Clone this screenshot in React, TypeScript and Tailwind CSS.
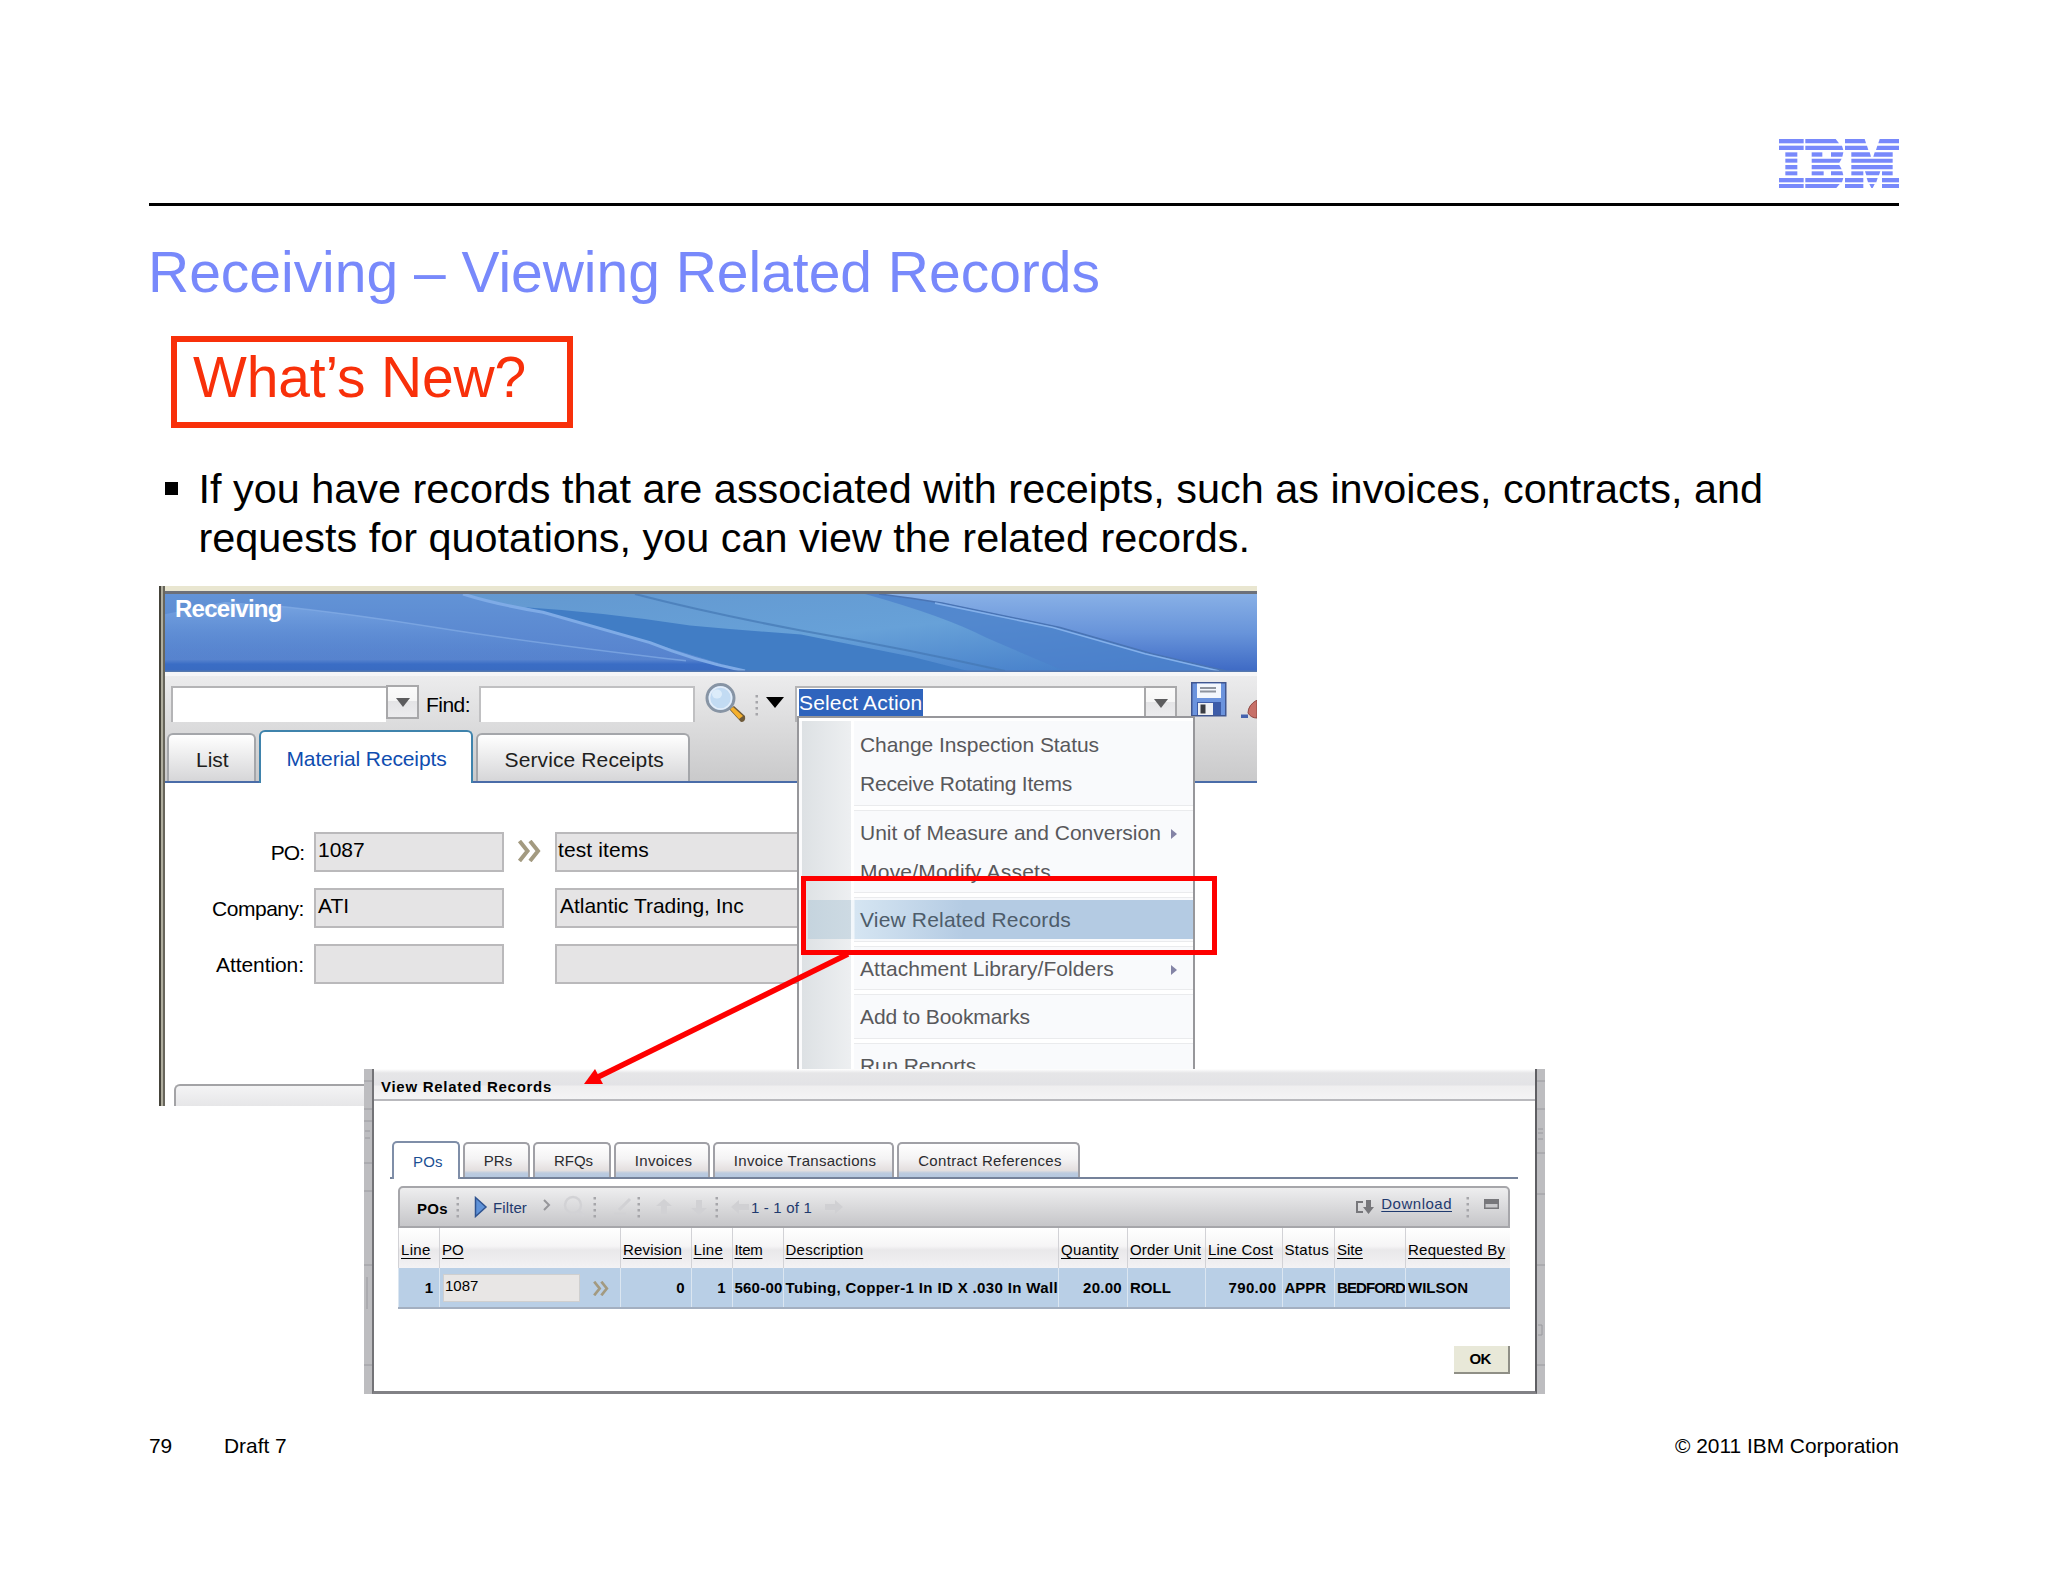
import React from 'react';
import clsx from 'clsx';

// Every stripe of the logo: y, height and the horizontal segments in it
const LOGO_STRIPES: { y: number; h: number; segs: string[] }[] = [
  { y: 0, h: 13, segs: ['0,74', '79,170,180', '198,257,261', '302,360,360,298'] },
  { y: 20, h: 13, segs: ['0,74', '79,189,193', '198,264,268', '295,360,360,291'] },
  { y: 40, h: 13, segs: ['19,55', '98,130', '156,193,190', '217,272,276', '287,341,341,283'] },
  { y: 59, h: 12, segs: ['19,55', '98,188,181', '217,341'] },
  { y: 78, h: 13, segs: ['19,55', '98,181,188', '217,341'] },
  { y: 97, h: 12, segs: ['19,55', '98,134', '156,190,193', '217,253', '258,304,300,262', '309,341'] },
  { y: 117, h: 13, segs: ['0,74', '79,193,189', '198,253', '263,296,292,267', '309,360'] },
  { y: 135, h: 12, segs: ['0,74', '79,182,172', '198,253', '271,287,281,277', '309,360'] },
];

const Logo = () => (
  <svg width="120" height="49" viewBox="0 0 360 147" fill="#7889fb">
    {LOGO_STRIPES.map(({ y, h, segs }) =>
      segs.map((seg) => {
        const [x1, x2, x3 = x2, x4 = x1] = seg.split(',').map(Number);
        return <polygon key={`${y}-${seg}`} points={`${x1},${y} ${x2},${y} ${x3},${y + h} ${x4},${y + h}`} />;
      })
    )}
  </svg>
);

const Banner = () => (
  <svg className="block w-full h-[78px]" viewBox="0 0 1092 77" preserveAspectRatio="none">
    <defs>
      <linearGradient id="base" x1="0" y1="0" x2="0" y2="1">
        <stop offset="0" stopColor="#6293d6" />
        <stop offset="0.84" stopColor="#5783ce" />
        <stop offset="0.9" stopColor="#3a6dc5" />
        <stop offset="1" stopColor="#3a6bc0" />
      </linearGradient>
      <linearGradient id="glow" x1="0" y1="0" x2="0" y2="1">
        <stop offset="0" stopColor="#7aa6e2" />
        <stop offset="1" stopColor="#4f80cf" stopOpacity="0" />
      </linearGradient>
      <linearGradient id="right" x1="0" y1="0" x2="0" y2="1">
        <stop offset="0" stopColor="#88b0e6" />
        <stop offset="0.5" stopColor="#6894da" />
        <stop offset="1" stopColor="#3d69c4" />
      </linearGradient>
      <linearGradient id="mid" x1="0" y1="0" x2="1" y2="1">
        <stop offset="0" stopColor="#6398d0" />
        <stop offset="0.5" stopColor="#67a1d8" />
        <stop offset="1" stopColor="#4079c8" />
      </linearGradient>
    </defs>
    <rect width="1092" height="77" fill="url(#base)" />
    <path d="M60 8 Q160 14 271 33 T521 66 L400 66 L0 66 L0 20 Z" fill="url(#glow)" />
    <path d="M106 11 Q190 20 271 33 T521 66" fill="none" stroke="#83ade6" strokeWidth="1.5" opacity="0.7" />
    <path d="M298 0 Q330 10 378 18 L485 48 L580 76 L1061 76 L987 59 L895 33 L777 9 L714 0 Z" fill="url(#mid)" />
    <path d="M360 13 Q440 18 525 31 Q580 36 636 40 L747 62 L803 76 L580 76 L485 48 Z" fill="#417dc5" />
    <path d="M470 0 Q540 18 636 36 Q740 54 840 76" fill="none" stroke="#4478b4" strokeWidth="2" opacity="0.7" />
    <path d="M700 0 Q780 22 821 43 Q870 64 900 76 L1061 76 L987 59 L895 33 L777 9 L714 0 Z" fill="#4c80cb" opacity="0.75" />
    <path d="M714 0 Q740 3 777 9 L895 33 L987 59 L1061 76 L1092 77 L1092 0 Z" fill="url(#right)" />
    <path d="M298 0 Q330 10 378 18 L485 48 Q530 66 580 76" fill="none" stroke="#7fabe6" strokeWidth="3" />
    <path d="M714 0 Q740 3 777 9 L895 33 L987 59 L1061 76" fill="none" stroke="#4a74b4" strokeWidth="1.5" />
    <path d="M770 9 L888 33 L980 59 L1054 76" fill="none" stroke="#84b0ea" strokeWidth="1.6" />
    <rect y="75.5" width="1092" height="1.5" fill="#5578ae" />
  </svg>
);

const SearchIcon = () => (
  <svg className="mt-[-4px] ml-[10px] shrink-0" width="42" height="42" viewBox="0 0 42 42">
    <path d="M24 27 L29 24 L40 34 Q41 40 36 40 Z" fill="#6e5a3a" />
    <path d="M25 27 L28 25 L38 34 L34 37 Z" fill="#f5b02c" />
    <circle cx="15.5" cy="16" r="13.5" fill="#c2dbf3" stroke="#8794a4" strokeWidth="3" />
    <circle cx="15.5" cy="16" r="11" fill="none" stroke="#e4eefa" strokeWidth="1.5" />
    <ellipse cx="12" cy="12" rx="5" ry="4.5" fill="#dcecfa" />
  </svg>
);

const SaveIcon = () => (
  <svg className="mt-[-4px] ml-[14px] shrink-0" width="36" height="35" viewBox="0 0 36 35">
    <rect x="0.75" y="0.75" width="34" height="33" fill="#6b93dd" stroke="#40568f" strokeWidth="1.5" />
    <rect x="6" y="1.5" width="24" height="14.5" fill="#f3f7fd" />
    <rect x="9" y="5" width="16" height="2" fill="#8e949e" />
    <rect x="9" y="8.5" width="16" height="2" fill="#8e949e" />
    <rect x="6" y="20" width="24" height="13" fill="#3d5ca8" />
    <rect x="7" y="21" width="15" height="12" fill="#f0f1f3" />
    <rect x="9.5" y="22.5" width="5" height="9" fill="#3a3c42" />
  </svg>
);

const ClearIcon = () => (
  <svg className="mt-[14px] ml-[13px] shrink-0" width="17" height="20" viewBox="0 0 17 20">
    <rect x="1" y="14.5" width="7" height="3.5" fill="#4563ae" />
    <path d="M17 0 Q8 5 8 13 Q11 18 17 18 Z" fill="#c77068" stroke="#8f4640" strokeWidth="1" />
  </svg>
);

const Chevrons = ({ className }: { className: string }) => (
  <svg className={className} viewBox="0 0 24 22" fill="none" stroke="#a39a80" strokeWidth="4">
    <path d="M2 1 L10 11 L2 21 M12.5 1 L20.5 11 L12.5 21" />
  </svg>
);

const Dots = ({ className }: { className: string }) => (
  <svg className={className} width="4" height="22" viewBox="0 0 4 22" fill="#a6a6aa">
    {[1, 7, 13, 19].map((y) => (
      <rect key={y} x="0.5" y={y} width="2.5" height="2.5" />
    ))}
  </svg>
);

const DropButton = ({ className }: { className?: string }) => (
  <div
    className={clsx(
      'flex h-[34px] w-[33px] shrink-0 items-center justify-center border-2 border-[#a8a8aa] bg-[linear-gradient(#fafafa_0,#f6f6f6_45%,#e4e4e6_46%,#ececee_100%)]',
      className
    )}
  >
    <svg width="14" height="9" viewBox="0 0 14 9" fill="#5c5c5e">
      <path d="M0 0 H14 L7 9 Z" />
    </svg>
  </div>
);

const FORM_ROWS = [
  { label: 'PO:', value: '1087', detail: 'test items', link: true, labelClass: 'tracking-[-1px]', detailClass: 'pl-[1px] tracking-[0.11px]' },
  { label: 'Company:', value: 'ATI', detail: 'Atlantic Trading, Inc', link: false, labelClass: 'tracking-[-0.46px]', detailClass: 'pl-[3px] tracking-[-0.04px]' },
  { label: 'Attention:', value: '', detail: '', link: false, labelClass: 'tracking-[-0.07px]', detailClass: '' },
];

const MENU: ({ text: string; cls: string; sub?: boolean; active?: boolean } | null)[] = [
  { text: 'Change Inspection Status', cls: 'tracking-[-0.06px]' },
  { text: 'Receive Rotating Items', cls: 'tracking-[-0.23px]' },
  null,
  { text: 'Unit of Measure and Conversion', cls: 'tracking-[-0.01px]', sub: true },
  { text: 'Move/Modify Assets', cls: 'tracking-[0.23px]' },
  null,
  { text: 'View Related Records', cls: 'tracking-[0.18px]', active: true },
  null,
  { text: 'Attachment Library/Folders', cls: 'tracking-[0.07px]', sub: true },
  null,
  { text: 'Add to Bookmarks', cls: 'tracking-[-0.1px]' },
  null,
  { text: 'Run Reports', cls: 'tracking-[-0.17px]' },
];

const DIALOG_TABS = [
  { text: 'PRs', cls: 'w-[67px]' },
  { text: 'RFQs', cls: 'w-[78px]' },
  { text: 'Invoices', cls: 'w-[96px] tracking-[0.3px]' },
  { text: 'Invoice Transactions', cls: 'w-[181px] tracking-[0.28px]' },
  { text: 'Contract References', cls: 'w-[183px] tracking-[0.32px]' },
];

const COLUMNS = [
  { head: 'Line', cls: 'tracking-[0.3px]', value: '1', cellCls: 'text-right pr-[6px]' },
  { head: 'PO', cls: '', value: '', cellCls: '' },
  { head: 'Revision', cls: 'tracking-[0.18px]', value: '0', cellCls: 'text-right pr-[6px]' },
  { head: 'Line', cls: 'tracking-[0.3px]', value: '1', cellCls: 'text-right pr-[6px]' },
  { head: 'Item', cls: 'tracking-[-0.3px]', value: '560-00', cellCls: 'tracking-[0.22px]' },
  { head: 'Description', cls: 'tracking-[0.25px]', value: 'Tubing, Copper-1 In ID X .030 In Wall', cellCls: 'tracking-[0.36px]' },
  { head: 'Quantity', cls: 'tracking-[0.25px]', value: '20.00', cellCls: 'text-right pr-[5px] tracking-[0.29px]' },
  { head: 'Order Unit', cls: 'tracking-[0.18px]', value: 'ROLL', cellCls: '' },
  { head: 'Line Cost', cls: 'tracking-[0.18px]', value: '790.00', cellCls: 'text-right pr-[5px] tracking-[0.35px]' },
  { head: 'Status', cls: 'tracking-[0.35px] no-underline!', value: 'APPR', cellCls: '' },
  { head: 'Site', cls: '', value: 'BEDFORD', cellCls: 'tracking-[-0.88px]' },
  { head: 'Requested By', cls: 'tracking-[0.25px]', value: 'WILSON', cellCls: '' },
];

const GRID =
  'grid grid-cols-[41px_181px_70.5px_41px_51px_275.5px_69px_78px_76.5px_52.5px_71px_1fr]';

const ReceivingWindow = () => (
  <div className="ml-[159px] flex h-[520px] w-[1098px] text-[21px]">
    <div className="w-[2px] bg-[#45433a]" />
    <div className="w-[2px] bg-[#b0ae9f]" />
    <div className="w-[2px] bg-[#68665c]" />
    <div className="flex w-[1092px] flex-col overflow-hidden">
      <div className="h-[5px] shrink-0 bg-[#e9e6d0]" />
      <div className="h-[3px] shrink-0 bg-[#6c7078]" />
      <div className="relative h-[78px] shrink-0">
        <Banner />
        <div className="absolute left-[10px] top-[1px] text-[24px] font-bold leading-[28px] tracking-[-0.75px] text-white">
          Receiving
        </div>
      </div>
      <div className="h-[4px] shrink-0 bg-[#f6f6f7]" />
      <div className="flex h-[107px] shrink-0 flex-col justify-between bg-linear-to-b from-[#ececed] to-[#c9c9ca]">
        <div className="flex items-start pt-[10px]">
          <div className="ml-[6px] flex h-[36px] w-[248px] shrink-0 items-start">
            <div className="h-[36px] w-[215px] border-l-2 border-t-2 border-[#b4b4b6] bg-white" />
            <DropButton className="mt-[-1px]" />
          </div>
          <div className="ml-[7px] mt-[6px] w-[53px] shrink-0 leading-[25px] tracking-[-0.54px]">Find:</div>
          <div className="h-[36px] w-[216px] shrink-0 border-2 border-b-0 border-[#c0c0c2] bg-white" />
          <SearchIcon />
          <Dots className="mt-[8px] ml-[8px] shrink-0" />
          <svg className="mt-[11px] ml-[7px] shrink-0" width="18" height="11" viewBox="0 0 18 11">
            <path d="M0 0 H18 L9 11 Z" />
          </svg>
          <div className="ml-[11px] flex h-[36px] w-[382px] shrink-0 items-start justify-between border-l-2 border-t-2 border-[#b4b4b6] bg-white">
            <div className="ml-[2px] mt-[1px] h-[28px] w-[124px] bg-[#2f64bd] leading-[27px] tracking-[0.15px] text-white">
              Select Action
            </div>
            <DropButton className="mt-[-2px]" />
          </div>
          <SaveIcon />
          <ClearIcon />
        </div>
        <div className="flex h-[52px] shrink-0 items-end border-b-2 border-[#4a6ca8] pl-[2px] leading-[50px]">
          <div className="h-[48px] w-[89px] rounded-t-[6px] border-2 border-b-0 border-[#a4a6aa] bg-linear-to-b from-white to-[#d6d6d8] pl-[27px] text-[#1e1e20]">
            List
          </div>
          <div className="mb-[-2px] ml-[2.5px] h-[53px] w-[214px] rounded-t-[6px] border-2 border-b-0 border-[#3f83ac] bg-white pl-[26px] leading-[54px] tracking-[-0.13px] text-[#0f4db0]">
            Material Receipts
          </div>
          <div className="ml-[3px] h-[48px] w-[214px] rounded-t-[6px] border-2 border-b-0 border-[#a4a6aa] bg-linear-to-b from-white to-[#d6d6d8] pl-[27px] tracking-[0.12px] text-[#1e1e20]">
            Service Receipts
          </div>
        </div>
      </div>
      <div className="flex grow flex-col bg-white">
        <div className="flex flex-col gap-[16px] pt-[49px]">
          {FORM_ROWS.map((row) => (
            <div key={row.label} className="flex h-[40px] items-center">
              <div className={clsx('w-[139px] pt-[2px] text-right leading-[42px]', row.labelClass)}>{row.label}</div>
              <div className="ml-[10px] h-[40px] w-[190px] border-2 border-[#bab9bb] bg-[#e5e4e5] pl-[2px] leading-[31px]">
                {row.value}
              </div>
              <div className="flex w-[51px] justify-center">
                {row.link && <Chevrons className="mb-[2px] h-[22px] w-[25px]" />}
              </div>
              <div className={clsx('h-[40px] w-[260px] border-2 border-[#bab9bb] bg-[#e5e4e5] leading-[31px]', row.detailClass)}>
                {row.detail}
              </div>
            </div>
          ))}
        </div>
        <div className="ml-[9px] mt-auto h-[22px] w-[240px] rounded-tl-[6px] border-l-2 border-t-2 border-[#a3a3a6] bg-linear-to-b from-[#f4f4f5] to-[#e6e6e8]" />
      </div>
    </div>
  </div>
);

const ActionMenu = () => (
  <div className="absolute left-[797px] top-[130px] h-[353px] w-[398px] overflow-hidden border-x-2 border-t-2 border-[#97979b] bg-[linear-gradient(to_right,#fbfbfc_0,#fbfbfc_3px,#dde1e4_3px,#edeff1_52px,#ffffff_52px,#ffffff_55px,#f9fafc_55px)] text-[21px] text-[#58585b]">
    <div className="h-[3px] bg-white" />
    <div className="pt-[4px]">
      {MENU.map((item, i) =>
        item ? (
          <div
            key={i}
            className={clsx(
              'flex h-[39px] items-center pl-[61px] leading-[39px]',
              item.active &&
                'bg-[linear-gradient(to_right,transparent_9px,#c5d4de_9px,#cddae3_52px,#f2f7fb_52px,#f2f7fb_55px,#d5e5f2_56px,#b4cbe3_165px)] text-[#4d5c6a]'
            )}
          >
            <span className={item.cls}>{item.text}</span>
            {item.sub && (
              <svg className="ml-auto mr-[16px] mt-[3px]" width="6" height="10" viewBox="0 0 6 10" fill="#8484a6">
                <path d="M0 0 L6 5 L0 10 Z" />
              </svg>
            )}
          </div>
        ) : (
          <div key={i} className="ml-[55px] flex h-[9.5px] items-center">
            <div className="h-[6px] w-full border-y border-[#eaebed] bg-white" />
          </div>
        )
      )}
    </div>
  </div>
);

// Faded toolbar buttons that are switched off
const GhostIcons = () => (
  <>
    <svg className="ml-[11px]" width="24" height="24" viewBox="0 0 24 24" fill="none" stroke="#d2d2d5" strokeWidth="2.5">
      <circle cx="11" cy="10" r="8" />
      <path d="M17 16 L22 21" />
    </svg>
    <Dots className="ml-[7px]" />
    <svg className="ml-[14px]" width="22" height="22" viewBox="0 0 22 22" fill="none" stroke="#d1d1d4" strokeWidth="3">
      <path d="M3 18 H15 M8 14 L19 3" />
    </svg>
    <Dots className="ml-[4px]" />
    <svg className="ml-[14px]" width="18" height="22" viewBox="0 0 18 22" fill="#d1d1d4">
      <path d="M9 3 L17 10 H12 V18 H6 V10 H1 Z" />
    </svg>
    <svg className="ml-[17px]" width="18" height="22" viewBox="0 0 18 22" fill="#d1d1d4">
      <path d="M9 19 L17 12 H12 V4 H6 V12 H1 Z" />
    </svg>
    <Dots className="ml-[7px]" />
    <svg className="ml-[11px]" width="20" height="18" viewBox="0 0 20 18" fill="#d0d0d3">
      <path d="M1 9 L9 2 V6 H19 V12 H9 V16 Z" />
    </svg>
  </>
);

const EdgeStrip = ({ marks }: { marks: string }) => (
  <div className="w-[8px] shrink-0 overflow-hidden bg-[#bdbdc0]">
    <svg width="8" height="325" viewBox="0 0 8 325" fill="none" stroke="#9a9a9f" strokeWidth="1">
      <path d={marks} />
    </svg>
  </div>
);

const RelatedRecordsDialog = () => (
  <div className="absolute left-[364px] top-[483px] flex h-[325px] w-[1180px] text-[15px]">
    <EdgeStrip marks="M0 12 H8 M0 40 H8 M0 52 H8 M1 62 H6 M1 69 H6 M0 94 H8 M0 122 H8 M0 196 H8 M3 208 V240 M0 296 H8" />
    <div className="flex w-[1165px] shrink-0 flex-col border-b-[3px] border-l-2 border-r-2 border-b-[#818185] border-l-[#737377] border-r-[#5f5f63] bg-white">
      <div className="h-[32px] shrink-0 border-b-2 border-[#b9b9bd] bg-[linear-gradient(#ffffff_0,#e6e6e8_4px,#e3e3e6_16px,#efeeef_17px,#f4f4f5_30px)] pl-[7px] font-bold leading-[35px] tracking-[0.73px]">
        View Related Records
      </div>
      <div className="ml-[16px] mt-[40px] flex h-[38px] w-[1128px] shrink-0 items-end gap-[3px] border-b-2 border-[#75829a] pl-[2px] leading-[34px] text-[#2b2b2f]">
        <div className="mb-[-2px] h-[38px] w-[68px] rounded-t-[5px] border-2 border-b-0 border-[#7f8ea8] bg-white pl-[19px] leading-[37px] tracking-[0.2px] text-[#1a4f93]">
          POs
        </div>
        {DIALOG_TABS.map((tab) => (
          <div
            key={tab.text}
            className={clsx(
              'h-[35px] rounded-t-[5px] border-2 border-b-0 border-[#a0a0a6] bg-[linear-gradient(#ffffff_0,#f4f3f4_45%,#e4dfdf_80%,#bccbdf_88%,#b5c8e0_100%)] pl-[3px] text-center',
              tab.cls
            )}
          >
            {tab.text}
          </div>
        ))}
      </div>
      <div className="ml-[24px] mt-[7px] w-[1112px]">
        <div className="flex h-[42px] items-center rounded-t-[5px] border-2 border-[#a6a6aa] bg-linear-to-b from-[#eeeeef] to-[#c6c6c9] pl-[17px] text-[#1f3a6e]">
          <span className="pt-[5px] font-bold tracking-[0.33px] text-black">POs</span>
          <Dots className="ml-[8px]" />
          <svg className="ml-[14px]" width="14" height="22" viewBox="0 0 14 22" fill="#5f92d8" stroke="#2f5390" strokeWidth="1.5">
            <path d="M1.5 1.5 L12 11 L1.5 20.5 Z" />
          </svg>
          <span className="ml-[5px] pt-[2px] tracking-[0.1px]">Filter</span>
          <svg className="ml-[16px] mb-[4px]" width="8" height="12" viewBox="0 0 8 12" fill="none" stroke="#96969a" strokeWidth="2">
            <path d="M1 1 L6 6 L1 11" />
          </svg>
          <GhostIcons />
          <span className="ml-[1px] pt-[2px] tracking-[0.18px]">1 - 1 of 1</span>
          <svg className="ml-[12px]" width="20" height="18" viewBox="0 0 20 18" fill="#d0d0d3">
            <path d="M19 9 L11 2 V6 H1 V12 H11 V16 Z" />
          </svg>
          <svg className="ml-auto" width="19" height="16" viewBox="0 0 19 16" fill="none" stroke="#77777b" strokeWidth="2">
            <path d="M8 3 H2 V13 H8" />
            <path d="M8 8 H19 L13.5 15 Z M11 1 H16 V8 H11 Z" fill="#77777b" stroke="none" />
          </svg>
          <span className="ml-[7px] mb-[6px] tracking-[0.5px] underline underline-offset-2">Download</span>
          <Dots className="ml-[14px]" />
          <svg className="mb-[6px] ml-[14px] mr-[9px]" width="15" height="10" viewBox="0 0 15 10">
            <rect x="0.75" y="0.75" width="13.5" height="8.5" fill="#c9c9cc" stroke="#77777b" strokeWidth="1.5" />
            <rect width="15" height="5" fill="#77777b" />
          </svg>
        </div>
        <div className={clsx(GRID, 'h-[40px] bg-[linear-gradient(#ffffff_0,#f6f5f6_45%,#e9e8ea_55%,#f3f2f4_100%)] leading-[43px]')}>
          {COLUMNS.map((col, i) => (
            <div key={i} className="border-l border-[#d2d2d6] pl-[2px]">
              <span className={clsx('underline underline-offset-[3px]', col.cls)}>{col.head}</span>
            </div>
          ))}
        </div>
        <div className={clsx(GRID, 'h-[41px] border-b-2 border-[#a3afc0] bg-[#b9cfe6] font-bold leading-[39px]')}>
          {COLUMNS.map((col, i) =>
            col.head === 'PO' ? (
              <div key={i} className="flex items-center border-l border-[#dbe6f1] pl-[3px] font-normal">
                <div className="h-[28px] w-[137px] border border-[#cfcfcf] bg-[#e8e6e5] pl-px leading-[21px]">1087</div>
                <Chevrons className="ml-[12px] mt-[2px] h-[15px] w-[18px]" />
              </div>
            ) : (
              <div key={i} className={clsx('overflow-hidden whitespace-nowrap border-l border-[#dbe6f1] pl-[2px]', col.cellCls)}>
                {col.value}
              </div>
            )
          )}
        </div>
      </div>
      <div className="ml-auto mr-[25px] mt-[37px] h-[28px] w-[56px] border-b-2 border-r-2 border-[#8f8f86] bg-[#e8e8d8] pr-[2px] text-center font-bold leading-[26px] tracking-[-0.75px]">
        OK
      </div>
    </div>
    <EdgeStrip marks="M0 12 H8 M0 40 H8 M1 60 H6 M1 64 H6 M1 70 H6 M0 84 H8 M0 125 H8 M0 196 H8 M1 256 H5 V266 H1 M0 296 H8" />
  </div>
);

// Red frame round the menu entry and the arrow down to the dialog
const Callout = () => (
  <>
    <div className="absolute left-[801px] top-[290px] h-[79px] w-[416px] border-[5.5px] border-[#fe0000]" />
    <svg className="absolute left-[580px] top-[360px]" width="280" height="145" viewBox="0 0 280 145">
      <path d="M268 8 L16 132" stroke="#fe0000" strokeWidth="5.5" />
      <path d="M4 138 L15 123 L23 138 Z" fill="#fe0000" />
    </svg>
  </>
);

export default function App() {
  return (
    <div className="flex h-[1582px] w-[2048px] flex-col overflow-hidden whitespace-nowrap bg-white font-['Liberation_Sans',Arial,sans-serif] text-black">
      <header className="mx-[149px] flex h-[206px] shrink-0 flex-col items-end justify-end border-b-[3px] border-black pb-[15px]">
        <Logo />
      </header>
      <h1 className="ml-[148px] mt-[34px] text-[57px] leading-[64px] tracking-[-0.02px] text-[#7889fb]">
        Receiving – Viewing Related Records
      </h1>
      <div className="ml-[171px] mt-[32px] h-[92px] w-[402px] shrink-0 border-[6px] border-[#f8300a] pl-[16px] pt-[3px] text-[57px] leading-[64px] tracking-[-0.15px] text-[#f8300a]">
        What’s New?
      </div>
      <div className="ml-[165px] mt-[37px] flex h-[99px] shrink-0 text-[41.4px] leading-[49.4px]">
        <div className="mt-[17px] h-[13px] w-[13px] bg-black" />
        <p className="ml-[20.5px]">
          If you have records that are associated with receipts, such as invoices, contracts, and
          <br />
          requests for quotations, you can view the related records.
        </p>
      </div>
      <main className="relative mt-[22px] h-[520px] shrink-0">
        <ReceivingWindow />
        <ActionMenu />
        <RelatedRecordsDialog />
        <Callout />
      </main>
      <footer className="mx-[149px] mt-[328px] flex text-[20.9px] leading-[24px]">
        <span className="w-[75px]">79</span>
        <span>Draft 7</span>
        <span className="ml-auto">© 2011 IBM Corporation</span>
      </footer>
    </div>
  );
}
